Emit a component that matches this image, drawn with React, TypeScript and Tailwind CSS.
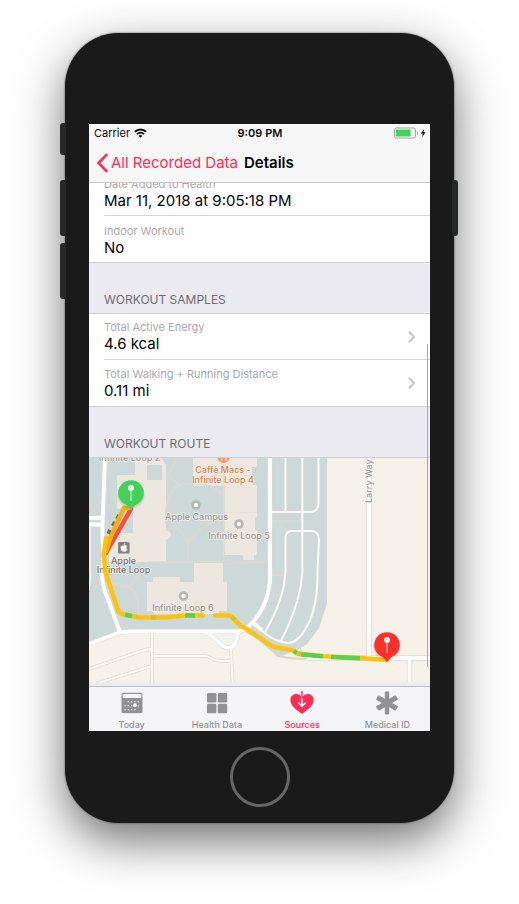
import React from "react";

const FONT = "font-['Inter','Liberation_Sans',sans-serif]";

function WifiIcon() {
  return (
    <svg width="13" height="10" viewBox="0 0 13 10" fill="none" aria-hidden="true">
      <path d="M0.9 3.7C4.1 0.7 8.9 0.7 12.1 3.7" stroke="#0a0a0a" strokeWidth="2" />
      <path d="M3 6.1C5 4.2 8 4.2 10 6.1" stroke="#0a0a0a" strokeWidth="1.8" />
      <path d="M4.6 7.7C5.8 6.7 7.2 6.7 8.4 7.7L6.5 9.7Z" fill="#0a0a0a" />
    </svg>
  );
}

function BatteryIcon() {
  return (
    <svg width="32" height="12" viewBox="0 0 32 12" aria-hidden="true">
      <rect x="0.5" y="1" width="21" height="10" rx="1.8" fill="#fff" stroke="#a5a5a5" />
      <rect x="2" y="2.5" width="14.6" height="7" fill="#42d458" />
      <path d="M23 4.2C24.6 4.6 24.6 7.4 23 7.8Z" fill="#a0a0a0" />
      <path d="M30.3 1.8L26.9 6.6H28.9L28 10.2L31.6 5.3H29.5Z" fill="#0a0a0a" />
    </svg>
  );
}

function Chevron() {
  return (
    <svg className="shrink-0" width="9" height="14" viewBox="0 0 9 14" fill="none" aria-hidden="true">
      <path d="M1.8 1.6L7.2 7L1.8 12.4" stroke="#c4c4c9" strokeWidth="1.9" />
    </svg>
  );
}

function TodayIcon() {
  const dots: [number, number][] = [];
  for (let row = 0; row < 3; row++) {
    for (let col = 0; col < 5; col++) {
      if ((row === 0 && col === 0) || (row === 2 && col === 4)) continue;
      dots.push([4 + col * 3.3, 9.8 + row * 4]);
    }
  }
  return (
    <svg width="22" height="22" viewBox="0 0 22 22" aria-hidden="true">
      <rect x="0.5" y="0.8" width="21" height="20.4" rx="2" fill="#929292" />
      <rect x="1.7" y="2" width="18.6" height="4" rx="0.6" fill="#f6f6f8" />
      {dots.map(([x, y]) => (
        <circle key={x + "-" + y} cx={x} cy={y} r="0.75" fill="#e8e8e8" />
      ))}
      <circle cx="14" cy="13.2" r="1.9" fill="#fff" />
    </svg>
  );
}

function GridIcon() {
  return (
    <svg width="22" height="22" viewBox="0 0 22 22" fill="#929292" aria-hidden="true">
      <rect x="1" y="1" width="9.4" height="9.4" rx="1.2" />
      <rect x="11.8" y="1" width="9.4" height="9.4" rx="1.2" />
      <rect x="1" y="11.8" width="9.4" height="9.4" rx="1.2" />
      <rect x="11.8" y="11.8" width="9.4" height="9.4" rx="1.2" />
    </svg>
  );
}

function HeartIcon() {
  return (
    <svg width="24" height="24" viewBox="0 0 24 24" fill="none" aria-hidden="true">
      <path
        d="M12 23C5.5 18 0.4 14.4 0.4 8.9C0.4 5.4 3 3 6.1 3C8.7 3 11 4.4 12 6.8C13 4.4 15.3 3 17.9 3C21 3 23.6 5.4 23.6 8.9C23.6 14.4 18.5 18 12 23Z"
        fill="#fd2d55"
      />
      <path d="M12 0V8" stroke="#fd2d55" strokeWidth="1.4" />
      <path d="M12 7.2V15.4M8.4 11.8L12 15.4L15.6 11.8" stroke="#fff" strokeWidth="1.5" />
    </svg>
  );
}

function AsteriskIcon() {
  return (
    <svg width="24" height="24" viewBox="0 0 24 24" fill="#929292" aria-hidden="true">
      <rect x="9.8" y="0.6" width="4.4" height="22.8" rx="0.9" />
      <rect x="9.5" y="0.6" width="5" height="22.8" rx="0.9" transform="rotate(60 12 12)" />
      <rect x="9.5" y="0.6" width="5" height="22.8" rx="0.9" transform="rotate(120 12 12)" />
    </svg>
  );
}

function MapLabel({ x, y, color = "#999896", children }: { x: number; y: number; color?: string; children: string }) {
  return (
    <text
      x={x}
      y={y}
      fill={color}
      stroke="#f4f0ec"
      strokeWidth="1.4"
      strokeLinejoin="round"
      paintOrder="stroke"
      textAnchor="middle"
      className="text-[9px] font-medium"
    >
      {children}
    </text>
  );
}

function Pin({ x, y, color }: { x: number; y: number; color: string }) {
  return (
    <g>
      <circle cx={x} cy={y + 2} r="13.5" fill="#000" opacity="0.1" />
      <path d={`M${x - 6} ${y + 10}L${x} ${y + 17}L${x + 6} ${y + 10}Z`} fill={color} />
      <circle cx={x} cy={y} r="12.8" fill={color} />
      <circle cx={x} cy={y - 5} r="2.9" fill="#fff" />
      <path d={`M${x} ${y - 3}V${y + 8}`} stroke="#fff" strokeWidth="1" opacity="0.85" />
      <circle cx={x - 0.8} cy={y - 5.8} r="0.9" fill={color} opacity="0.35" />
    </g>
  );
}

const MINOR = [
  "M152 632V683",
  "M152 656H205C211 656 213 661 219 661H232",
  "M231 647L232.500 683",
  "M89 669L143 650.500Q147 649 152 649.500",
  "M98 683L152 666",
];

const ROADS = [
  "M105 457L102.500 525Q102 542 104 554L102 578Q103 588 109 602L120 632",
  "M89 518H103M89 524.500H103",
  "M89 644L118 633Q124 631.500 132 631.500H238",
  "M207 631.500L220 643.500Q224 648 230 647.500Q237 646 238 631.500",
  "M270 457V576Q270 602 253 622Q246 630 238 632",
  "M253 623L262 630",
];

const PARKING = [
  "M285.500 457V512",
  "M302.300 457V571Q301 602 281 641",
  "M270 512H311Q318.500 511 318.500 503V457",
  "M285.500 571V537Q286 531 292 531H312Q319 532 319 540L317.500 571Q318 608 306 628Q297 644 287 643Q272 641 260 629",
  "M285.500 570Q285 598 265 632",
];

const PATHS = [
  "M224 457V564L270 561",
  "M166 524Q163 478 196 484Q216 484 224 497",
  "M176 457Q174 469 167 474",
  "M205 485L213 476L224 470M181 487L173 479L166 474",
  "M166 530Q179 522 188 543V562",
  "M188 543Q199 526 224 518M189 544L188 535",
  "M147 562H223",
  "M104 584H121Q138 587 138 606V632",
  "M113 584Q126 590 132 584L137 576L152 569",
  "M270 521H302M279 521Q282 530 287 529",
  "M272 575H285",
  "M297 642L304 656",
  "M89 503Q96 510 94 517",
];

function RouteMap() {
  return (
    <svg
      className="block h-[224px] w-full font-['Inter','Liberation_Sans',sans-serif]"
      viewBox="89 458 341 224"
      preserveAspectRatio="xMidYMid slice"
      fill="none"
      role="img"
      aria-label="Workout route"
    >
      <rect x="0" y="400" width="600" height="340" fill="#f6f2ea" />
      <path
        d="M89 457H327V604L319 628L307 644L299 649L282 656L275 654L258 640L243 631H125L89 643Z"
        fill="#cdd9d9"
      />
      <path d="M104 457H108L105 524L102 524Z" fill="#e6e2d8" />

      <g fill="#eee7e0">
        <path d="M135 457H161L166 465V530Q176 534 166 540V562H109V533H133V509H117V475H135Z" />
        <path d="M193 457H257V467H252V485H257V517H255V530H257V555H254V560H243V555H223V486H193Z" />
        <path d="M153 582V577H180V582H194V563H223V582H227V611H219V614H154V611H147V582Z" />
      </g>
      <rect x="147" y="465" width="15" height="15" fill="#cdd9d9" />
      <path d="M223 512.500H257" stroke="#e2dcd4" strokeWidth="0.7" />

      <g stroke="#ddd8cb" strokeWidth="1.500">
        {PATHS.map((d) => (
          <path key={d} d={d} />
        ))}
      </g>
      <path d="M262 641L278 656Q290 659 307 659" stroke="#ddd5c8" strokeWidth="2" />

      <g stroke="#e2ddd3" strokeWidth="3.6">
        {MINOR.map((d) => (
          <path key={d} d={d} />
        ))}
      </g>
      <g stroke="#e0dbd1" strokeWidth="5.400">
        <path d="M369 457V658M307 658H430M409.500 658V683" />
      </g>
      <g stroke="#d9dcd8" strokeWidth="5">
        {ROADS.map((d) => (
          <path key={d} d={d} />
        ))}
      </g>
      <g stroke="#fbfaf6" strokeWidth="2">
        {MINOR.map((d) => (
          <path key={d} d={d} />
        ))}
        {PARKING.map((d) => (
          <path key={d} d={d} />
        ))}
      </g>
      <g stroke="#fff" strokeWidth="3.800">
        {ROADS.map((d) => (
          <path key={d} d={d} />
        ))}
        <path d="M369 457V658M307 658H430M409.500 658V683" />
      </g>
      <path d="M90 526V570Q91 578 89 590" stroke="#f4f3ef" strokeWidth="1.6" />

      <MapLabel x={129.5} y={461}>Infinite Loop 2</MapLabel>
      <circle cx="223.500" cy="457" r="6" fill="#f79a58" />
      <path d="M221.500 456V461M226 456V461" stroke="#fff" strokeWidth="1" />
      <MapLabel x={223} y={473} color="#e3803c">Caffè Macs -</MapLabel>
      <MapLabel x={223} y={482.5} color="#e3803c">Infinite Loop 4</MapLabel>
      {[
        [196, 505],
        [239, 524],
        [183.5, 596],
      ].map(([x, y]) => (
        <circle key={x} cx={x} cy={y} r="3.500" fill="#fff" stroke="#b9b6b1" strokeWidth="2.600" />
      ))}
      <MapLabel x={196.5} y={520}>Apple Campus</MapLabel>
      <MapLabel x={239} y={539}>Infinite Loop 5</MapLabel>
      <MapLabel x={183} y={611}>Infinite Loop 6</MapLabel>
      <rect x="118" y="542" width="11.600" height="11.600" rx="1.500" fill="#85807e" />
      <path
        d="M124 545.600C125.500 544.900 126.800 545.300 127.200 546.200C126 547.100 126.200 548.700 127.500 549.300C126.900 551.200 125.800 552.100 123.900 551.400C121.800 552.100 120.500 549.800 120.600 547.700C120.800 545.700 122.400 545 124 545.600ZM123.800 545C123.800 543.900 124.400 543.200 125.300 543C125.300 544.100 124.700 544.900 123.800 545Z"
        fill="#fff"
      />
      <MapLabel x={123.5} y={564} color="#77736f">Apple</MapLabel>
      <MapLabel x={123.5} y={573} color="#77736f">Infinite Loop</MapLabel>
      <text
        transform="translate(372 503) rotate(-90)"
        fill="#99968f"
        stroke="#fff"
        strokeWidth="1.2"
        paintOrder="stroke"
        className="text-[9px] font-medium"
      >
        Larry Way
      </text>

      <g stroke="#6c6c68" strokeWidth="4.500">
        <path d="M119.500 515L117.300 519M115.200 522L113 526M110.500 530L108.500 534" />
      </g>
      <g strokeWidth="4.500" strokeLinejoin="round" strokeLinecap="round">
        <path d="M131 509L106 553" stroke="#fb4d42" />
        <path d="M129 508H124L117 523L110 539L106 551" stroke="#eab40c" />
        <path d="M106 538L104.500 549L104 556L105 570L117.500 609Q119 614 124 614.500L140 617.500L165 617.500L185 615.500H203" stroke="#fec40c" />
        <path d="M215 615.500H228Q231 615.500 233 618L240 625.500L246 628.500L260 638Q267 643.500 274 647L292 650L297 653.500L323 656.300L360 658L387 660" stroke="#fec40c" />
      </g>
      <g strokeWidth="4.500">
        <path d="M125 614.700L132 616M185 615.500H195M294 651L297 653M301 654.500L323 656.300M331 656.900L360 658.200" stroke="#5bd04b" />
        <path d="M151 617.500H156M232 617L235 620M298 653.500L301 654.500" stroke="#d3c328" />
      </g>

      <Pin x={131} y={493} color="#42d15a" />
      <Pin x={387} y={645} color="#fd312c" />
    </svg>
  );
}

function Field({ label, value }: { label: string; value: string }) {
  return (
    <span className="flex flex-col text-left">
      <span className="text-[11px] leading-[15px] text-[#a9a9ab]">{label}</span>
      <span className="text-[15px] leading-[18px] text-[#050505]">{value}</span>
    </span>
  );
}

function SectionTitle({ children }: { children: string }) {
  return (
    <h2 className="flex h-[51px] items-end border-b border-[#d0d0d4] bg-[#ebebf1] px-[15px] pb-[5px] text-xs leading-4 text-[#6d6d72]">
      {children}
    </h2>
  );
}

const TABS = [
  { label: "Today", icon: <TodayIcon />, active: false },
  { label: "Health Data", icon: <GridIcon />, active: false },
  { label: "Sources", icon: <HeartIcon />, active: true },
  { label: "Medical ID", icon: <AsteriskIcon />, active: false },
];

const SAMPLES = [
  { label: "Total Active Energy", value: "4.6 kcal" },
  { label: "Total Walking + Running Distance", value: "0.11 mi" },
];

const SIDE_BUTTON = "absolute w-1.5 bg-[#262827]";

export default function App() {
  return (
    <div className={`flex min-h-screen items-start justify-center overflow-hidden bg-white px-4 pt-[33px] pb-20 ${FONT}`}>
      <div className="relative w-full max-w-[389px] rounded-[54px] bg-[#1a1a1a] px-6 pt-[91px] pb-4 shadow-[0_0_2px_#444,0_18px_48px_rgba(0,0,0,0.56)]">
        <span className={`${SIDE_BUTTON} top-[90px] -left-[5px] h-8 rounded-l-[3px]`} />
        <span className={`${SIDE_BUTTON} top-[147px] -left-[5px] h-14 rounded-l-[3px]`} />
        <span className={`${SIDE_BUTTON} top-[210px] -left-[5px] h-14 rounded-l-[3px]`} />
        <span className={`${SIDE_BUTTON} top-[147px] -right-1 h-14 rounded-r-[3px]`} />

        <div className="relative overflow-hidden bg-[#ebebf1]">
          <header className="border-b border-[#c8c8ca] bg-[#f7f7f7]">
            <div className="grid h-[18px] grid-cols-[1fr_auto_1fr] items-center pr-1 pl-[5px] text-[11px] leading-[14px] text-[#0a0a0a]">
              <span className="flex items-center gap-1">
                Carrier
                <WifiIcon />
              </span>
              <span className="font-semibold">9:09 PM</span>
              <span className="flex justify-end">
                <BatteryIcon />
              </span>
            </div>
            <div className="flex h-10 items-center gap-1.5 px-[7px] pt-0.5 text-[15px]">
              <button type="button" className="flex items-center gap-0.5 text-[#fd2d55]">
                <svg width="13" height="20" viewBox="0 0 13 20" fill="none" aria-hidden="true">
                  <path d="M11.200 1.200L2.600 10L11.200 18.800" stroke="#fd2d55" strokeWidth="2.600" />
                </svg>
                All Recorded Data
              </button>
              <h1 className="font-semibold text-[#050505]">Details</h1>
            </div>
          </header>

          <main>
            <div className="bg-white pl-[15px]">
              <div className="flex h-[33px] flex-col justify-end overflow-hidden border-b border-[#d6d6d9] pb-[5px]">
                <Field label="Date Added to Health" value="Mar 11, 2018 at 9:05:18 PM" />
              </div>
              <div className="flex h-[46px] flex-col justify-end pb-[5px]">
                <Field label="Indoor Workout" value="No" />
              </div>
            </div>
            <div className="border-t border-[#d0d0d4]">
              <SectionTitle>WORKOUT SAMPLES</SectionTitle>
            </div>
            <div className="bg-white pl-[15px]">
              {SAMPLES.map((sample) => (
                <button
                  key={sample.label}
                  type="button"
                  className="flex h-[46px] w-full items-center justify-between border-b border-[#d6d6d9] pr-3.5 last:border-b-0"
                >
                  <Field label={sample.label} value={sample.value} />
                  <Chevron />
                </button>
              ))}
            </div>
            <div className="border-t border-[#d0d0d4]">
              <SectionTitle>WORKOUT ROUTE</SectionTitle>
            </div>
            <RouteMap />
          </main>

          <nav className="grid grid-cols-4 border-t border-[#bfbfc3] bg-[#f5f5f8] outline-[3px] outline-[#ebebf1] mt-1">
            {TABS.map((tab) => (
              <button
                key={tab.label}
                type="button"
                className={`flex h-11 flex-col items-center justify-between pt-1 text-[9px] leading-3 font-medium ${tab.active ? "text-[#fd2d55]" : "text-[#929292]"}`}
              >
                <span className="flex h-6 items-center">{tab.icon}</span>
                {tab.label}
              </button>
            ))}
          </nav>
          <span className="absolute top-[220px] right-[2px] h-[323px] w-px bg-[#a9a9ad]" />
        </div>

        <button
          type="button"
          aria-label="Home"
          className="mx-auto mt-4 block size-[60px] rounded-full border-[3px] border-[#666]"
        />
      </div>
    </div>
  );
}
